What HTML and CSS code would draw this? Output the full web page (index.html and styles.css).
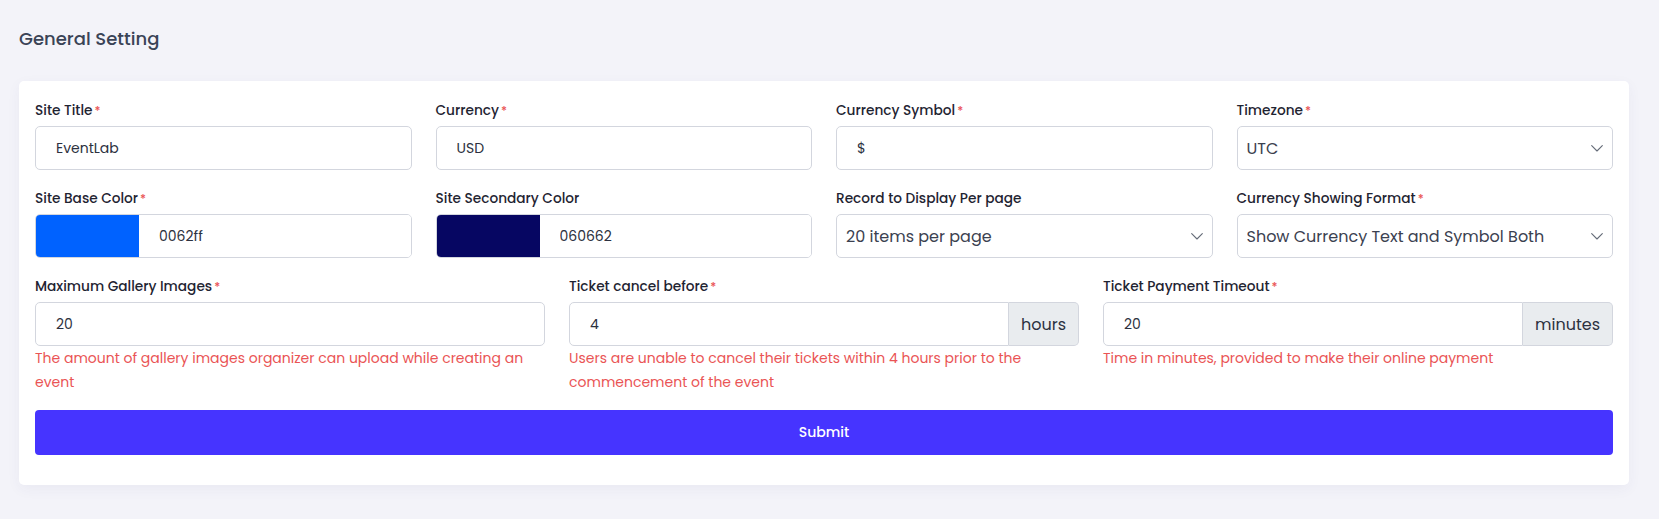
FILE: index.html
```html
<!DOCTYPE html>
<html lang="en">
<head>
<meta charset="utf-8">
<title>General Setting</title>
<link rel="stylesheet" href="styles.css">
</head>
<body>
<div class="page">
  <h1 class="page-title">General Setting</h1>
  <form class="card">
    <div class="grid grid-4">
      <div class="field">
        <label class="label">Site Title<span class="req">*</span></label>
        <input class="control" type="text" value="EventLab">
      </div>
      <div class="field">
        <label class="label">Currency<span class="req">*</span></label>
        <input class="control" type="text" value="USD">
      </div>
      <div class="field">
        <label class="label">Currency Symbol<span class="req">*</span></label>
        <input class="control" type="text" value="$">
      </div>
      <div class="field">
        <label class="label">Timezone<span class="req">*</span></label>
        <div class="select-wrap">
          <select class="control select"><option>UTC</option></select>
          <svg class="chevron" width="12" height="7" viewBox="0 0 12 7"><path d="M0.7 0.7l5.3 5.3 5.3-5.3" fill="none" stroke="#656c78" stroke-width="1.1" stroke-linecap="round" stroke-linejoin="round"/></svg>
        </div>
      </div>

      <div class="field">
        <label class="label">Site Base Color<span class="req">*</span></label>
        <div class="color-group">
          <span class="swatch swatch-base"></span>
          <input class="color-text" type="text" value="0062ff">
        </div>
      </div>
      <div class="field">
        <label class="label">Site Secondary Color</label>
        <div class="color-group">
          <span class="swatch swatch-secondary"></span>
          <input class="color-text" type="text" value="060662">
        </div>
      </div>
      <div class="field">
        <label class="label">Record to Display Per page</label>
        <div class="select-wrap">
          <select class="control select"><option>20 items per page</option></select>
          <svg class="chevron" width="12" height="7" viewBox="0 0 12 7"><path d="M0.7 0.7l5.3 5.3 5.3-5.3" fill="none" stroke="#656c78" stroke-width="1.1" stroke-linecap="round" stroke-linejoin="round"/></svg>
        </div>
      </div>
      <div class="field">
        <label class="label">Currency Showing Format<span class="req">*</span></label>
        <div class="select-wrap">
          <select class="control select"><option>Show Currency Text and Symbol Both</option></select>
          <svg class="chevron" width="12" height="7" viewBox="0 0 12 7"><path d="M0.7 0.7l5.3 5.3 5.3-5.3" fill="none" stroke="#656c78" stroke-width="1.1" stroke-linecap="round" stroke-linejoin="round"/></svg>
        </div>
      </div>
    </div>

    <div class="grid grid-3">
      <div class="field">
        <label class="label">Maximum Gallery Images<span class="req">*</span></label>
        <input class="control" type="text" value="20">
        <p class="help">The amount of gallery images organizer can upload while creating an event</p>
      </div>
      <div class="field">
        <label class="label">Ticket cancel before<span class="req">*</span></label>
        <div class="input-group">
          <input class="control group-input" type="text" value="4">
          <span class="addon addon-hours">hours</span>
        </div>
        <p class="help">Users are unable to cancel their tickets within 4 hours prior to the commencement of the event</p>
      </div>
      <div class="field">
        <label class="label">Ticket Payment Timeout<span class="req">*</span></label>
        <div class="input-group">
          <input class="control group-input" type="text" value="20">
          <span class="addon addon-minutes">minutes</span>
        </div>
        <p class="help">Time in minutes, provided to make their online payment</p>
      </div>
    </div>

    <button class="submit" type="button">Submit</button>
  </form>
</div>
</body>
</html>
```

FILE: styles.css
```css
* { box-sizing: border-box; }

html, body {
  margin: 0;
  background: #f3f3f9;
}

body {
  font-family: "Poppins", Inter, "Noto Sans", sans-serif;
  color: #34395e;
}

.page {
  padding: 25px 30px 30px 19px;
}

.page-title {
  margin: 0 0 28px;
  font-size: 18px;
  line-height: 28px;
  font-weight: 500;
  color: #3a4356;
}

.card {
  background: #fff;
  border-radius: 5px;
  padding: 19px 16px 30px;
  box-shadow: 0 4px 14px rgba(60, 60, 120, 0.05);
}

.grid {
  display: grid;
  column-gap: 24px;
  row-gap: 18px;
}

.grid-4 { grid-template-columns: repeat(4, 1fr); margin-bottom: 18px; }
.grid-3 { grid-template-columns: repeat(3, 1fr); }

.field { min-width: 0; }

.label {
  display: block;
  font-size: 13.7px;
  line-height: 21px;
  font-weight: 500;
  color: #1f2432;
  margin-bottom: 5px;
}

.req {
  color: #ea5455;
  margin-left: 2px;
  font-size: 12px;
}

.control {
  display: block;
  width: 100%;
  height: 44px;
  border: 1px solid #d3d6de;
  border-radius: 5px;
  padding: 0 20px;
  font-family: inherit;
  font-size: 14px;
  color: #2c3140;
  background: #fff;
  outline: none;
}

.select-wrap { position: relative; }

.select {
  appearance: none;
  -webkit-appearance: none;
  padding: 0 40px 0 9px;
  font-size: 16px;
  color: #3b4150;
}

.chevron {
  position: absolute;
  right: 10px;
  top: 19px;
  pointer-events: none;
}

.color-group {
  display: flex;
  height: 44px;
  border: 1px solid #d3d6de;
  border-radius: 5px;
  overflow: hidden;
}

.swatch {
  flex: 0 0 104px;
  margin: -1px 0 -1px -1px;
}

.swatch-base { background: #0062ff; }
.swatch-secondary { background: #060662; }

.color-text {
  flex: 1;
  min-width: 0;
  border: 0;
  padding: 0 20px;
  font-family: inherit;
  font-size: 14px;
  color: #2c3140;
  outline: none;
}

.input-group {
  display: flex;
}

.group-input {
  flex: 1;
  min-width: 0;
  border-top-right-radius: 0;
  border-bottom-right-radius: 0;
}

.addon {
  display: flex;
  align-items: center;
  height: 44px;
  padding: 0 12px;
  background: #e9ecef;
  border: 1px solid #d3d6de;
  border-left: 0;
  border-radius: 0 5px 5px 0;
  font-size: 16px;
  color: #2c3140;
}

.help {
  margin: 0;
  font-size: 14px;
  line-height: 24px;
  color: #ea5455;
}

.submit {
  display: block;
  width: 100%;
  height: 45px;
  margin-top: 16px;
  border: 0;
  border-radius: 4px;
  background: #4634ff;
  color: #fff;
  font-family: inherit;
  font-size: 14px;
  font-weight: 500;
}
```
